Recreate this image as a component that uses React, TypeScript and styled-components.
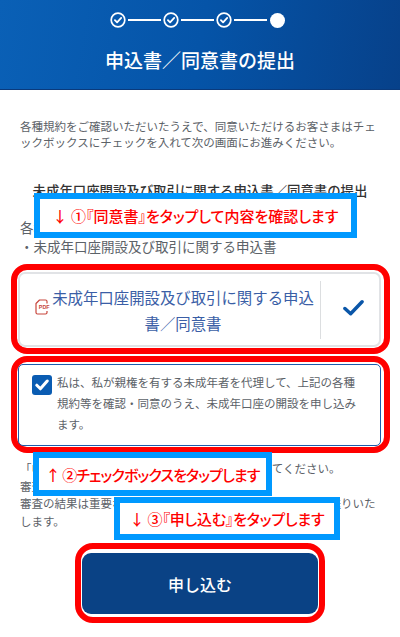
import { FC } from "react";

import styled, { createGlobalStyle } from "styled-components";

const GlobalStyle = createGlobalStyle`
  html, body {
    margin: 0;
    padding: 0;
    background: #ffffff;
  }

  body {
    font-family: "Noto Sans CJK JP", "Noto Sans", sans-serif;
  }
`;

const StepDone: FC = () => (
  <svg width="16" height="16" viewBox="0 0 16 16" fill="none">
    <circle cx="8" cy="8" r="6.8" stroke="#ffffff" strokeWidth="1.7" />
    <path
      d="M4.9 8.2 L7.1 10.4 L11.2 5.9"
      stroke="#ffffff"
      strokeWidth="1.8"
      strokeLinecap="round"
      strokeLinejoin="round"
    />
  </svg>
);

const PdfIcon: FC = () => (
  <svg width="15" height="16" viewBox="0 0 15 16" fill="none">
    <path
      d="M12 4.5 V2.5 Q12 1 10.5 1 H4.5 L1 4.5 V13.5 Q1 15 2.5 15 H10.5 Q12 15 12 13.5 V12"
      stroke="#c8463c"
      strokeWidth="1.2"
      strokeLinejoin="round"
    />
    <text
      x="9.2"
      y="10.2"
      fill="#c8463c"
      fontSize="5.4"
      fontWeight="700"
      textAnchor="middle"
      fontFamily="Liberation Sans, sans-serif"
    >
      PDF
    </text>
  </svg>
);

const App: FC = () => (
  <Page>
    <GlobalStyle />

    <Header>
      <Steps>
        <StepDone />
        <StepLine />
        <StepDone />
        <StepLine />
        <StepDone />
        <StepLine />
        <StepCurrent />
      </Steps>
      <Title>申込書／同意書の提出</Title>
    </Header>

    <Main>
      <Intro>
        各種規約をご確認いただいたうえで、同意いただけるお客さまはチェックボックスにチェックを入れて次の画面にお進みください。
      </Intro>

      <SectionHeading>未成年口座開設及び取引に関する申込書／同意書の提出</SectionHeading>

      <DocList>
        <div>各種規約をご確認ください。</div>
        <div>・未成年口座開設及び取引に関する申込書</div>
      </DocList>

      <Ring>
        <DocCard>
          <DocLink>
            <PdfSlot>
              <PdfIcon />
            </PdfSlot>
            <DocTitle>未成年口座開設及び取引に関する申込書／同意書</DocTitle>
          </DocLink>
          <DocCheck>
            <svg width="21" height="18" viewBox="0 0 22 18" fill="none">
              <path
                d="M2 9.5 L8 15 L20 2.5"
                stroke="#0a56a8"
                strokeWidth="3.6"
                strokeLinecap="round"
                strokeLinejoin="round"
              />
            </svg>
          </DocCheck>
        </DocCard>
      </Ring>

      <Ring $second>
        <ConsentBox>
          <CheckBox>
            <svg width="14" height="12" viewBox="0 0 14 12" fill="none">
              <path
                d="M1.8 6.2 L5.4 9.8 L12.2 2"
                stroke="#ffffff"
                strokeWidth="3"
                strokeLinecap="round"
                strokeLinejoin="round"
              />
            </svg>
          </CheckBox>
          <ConsentText>
            私は、私が親権を有する未成年者を代理して、上記の各種規約等を確認・同意のうえ、未成年口座の開設を申し込みます。
          </ConsentText>
        </ConsentBox>
      </Ring>

      <Notes>
        <div>「申し込む」ボタンを押して、同意書類を提出してください。</div>
        <div>審査には数日かかる場合があります。</div>
        <div>
          審査の結果は重要なお知らせとしてご登録住所へ郵送にてお送りいたします。
        </div>
      </Notes>

      <SubmitRing>
        <SubmitButton type="button">申し込む</SubmitButton>
      </SubmitRing>
    </Main>

    <Callout $left={34} $top={193} $width={323} $height={45} $tracking={0}>
      ↓ ①『同意書』をタップして内容を確認します
    </Callout>
    <Callout $left={33} $top={452} $width={239} $height={44} $tracking={-0.9}>
      ↑ ②チェックボックスをタップします
    </Callout>
    <Callout $left={114} $top={497} $width={226} $height={43} $tracking={-0.2}>
      ↓ ③『申し込む』をタップします
    </Callout>
  </Page>
);

const Page = styled.div`
  position: relative;
  width: 400px;
  height: 637px;
  overflow: hidden;
  background: #ffffff;
`;

const Header = styled.header`
  display: flex;
  flex-direction: column;
  align-items: center;
  box-sizing: border-box;
  height: 90px;
  padding-top: 12px;
  background: linear-gradient(100deg, #0a60b6 0%, #0554a8 50%, #07418a 100%);
  border-bottom: 1px solid #0a3a7c;
`;

const Steps = styled.div`
  display: flex;
  align-items: center;
  height: 16px;
  margin-left: -5px;
`;

const StepLine = styled.span`
  display: block;
  width: 33px;
  height: 2px;
  margin: 0 2px;
  background: #ffffff;
`;

const StepCurrent = styled.span`
  display: block;
  width: 15px;
  height: 15px;
  margin-left: 1px;
  border-radius: 50%;
  background: #ffffff;
`;

const Title = styled.h1`
  margin: 19px 0 0;
  color: #ffffff;
  font-size: 19px;
  font-weight: 500;
  line-height: 26px;
`;

const Main = styled.main`
  display: flex;
  flex-direction: column;
  padding-top: 28px;
`;

const Intro = styled.p`
  margin: 0 20px;
  color: #5c6268;
  font-size: 11.5px;
  line-height: 16px;
`;

const SectionHeading = styled.h2`
  margin: 30px 0 0;
  color: #333333;
  font-size: 13.4px;
  font-weight: 500;
  line-height: 20px;
  text-align: center;
`;

const DocList = styled.div`
  margin: 18px 20px 8px;
  color: #5c6268;
  font-size: 13.5px;
  line-height: 19px;
`;

const Ring = styled.div<{ $second?: boolean }>`
  box-sizing: border-box;
  width: 379px;
  margin: ${({ $second }) => ($second ? "2px" : "0")} 0 0 11px;
  padding: 2px 3px 1px 1px;
  border: 6px solid #ff0000;
  border-radius: 16px;
`;

const DocCard = styled.div`
  display: flex;
  align-items: center;
  box-sizing: border-box;
  height: 75px;
  border: 2px solid #e1e3e6;
  border-radius: 7px;
`;

const DocLink = styled.div`
  display: flex;
  flex: 1;
  align-items: center;
  height: 58px;
  padding-left: 15px;
  border-right: 1px solid #dcdee0;
`;

const PdfSlot = styled.span`
  display: flex;
  flex: none;
  margin-top: -5px;
`;

const DocTitle = styled.span`
  width: 264px;
  margin-left: 1px;
  color: #3a5ea6;
  font-size: 15.4px;
  line-height: 26px;
  text-align: center;
`;

const DocCheck = styled.span`
  display: flex;
  flex: none;
  justify-content: center;
  box-sizing: border-box;
  width: 58px;
  margin-bottom: 3px;
  padding-left: 6px;
`;

const ConsentBox = styled.div`
  display: flex;
  gap: 5px;
  box-sizing: border-box;
  height: 82px;
  padding: 7px 12px 0 13px;
  border: 1.5px solid #1d5cab;
  border-radius: 5px;
`;

const CheckBox = styled.span`
  display: flex;
  flex: none;
  align-items: center;
  justify-content: center;
  width: 20px;
  height: 20px;
  margin-top: 3px;
  border-radius: 3px;
  background: #0a5cb2;
`;

const ConsentText = styled.p`
  width: 302px;
  margin: 0;
  color: #5c6268;
  font-size: 11.5px;
  line-height: 21px;
`;

const Notes = styled.div`
  margin: 7px 20px 0;
  color: #5c6268;
  font-size: 11.5px;
  line-height: 17.6px;
`;

const SubmitRing = styled.div`
  box-sizing: border-box;
  display: flex;
  align-self: center;
  width: 250px;
  height: 80px;
  margin-top: 13px;
  padding: 4px 1px 3px;
  border: 6px solid #ff0000;
  border-radius: 18px;
`;

const SubmitButton = styled.button`
  flex: 1;
  border: 0;
  border-radius: 9px;
  background: #0a4285;
  color: #ffffff;
  font-family: inherit;
  font-size: 16px;
  font-weight: 500;
`;

const Callout = styled.div<{
  $left: number;
  $top: number;
  $width: number;
  $height: number;
  $tracking: number;
}>`
  position: absolute;
  left: ${({ $left }) => $left}px;
  top: ${({ $top }) => $top}px;
  display: flex;
  align-items: center;
  justify-content: center;
  box-sizing: border-box;
  width: ${({ $width }) => $width}px;
  height: ${({ $height }) => $height}px;
  border: 6px solid #0099ff;
  background: #ffffff;
  color: #ff0000;
  font-size: 15px;
  font-weight: 500;
  font-feature-settings: "palt";
  letter-spacing: ${({ $tracking }) => $tracking}px;
  white-space: nowrap;
`;

export default App;
